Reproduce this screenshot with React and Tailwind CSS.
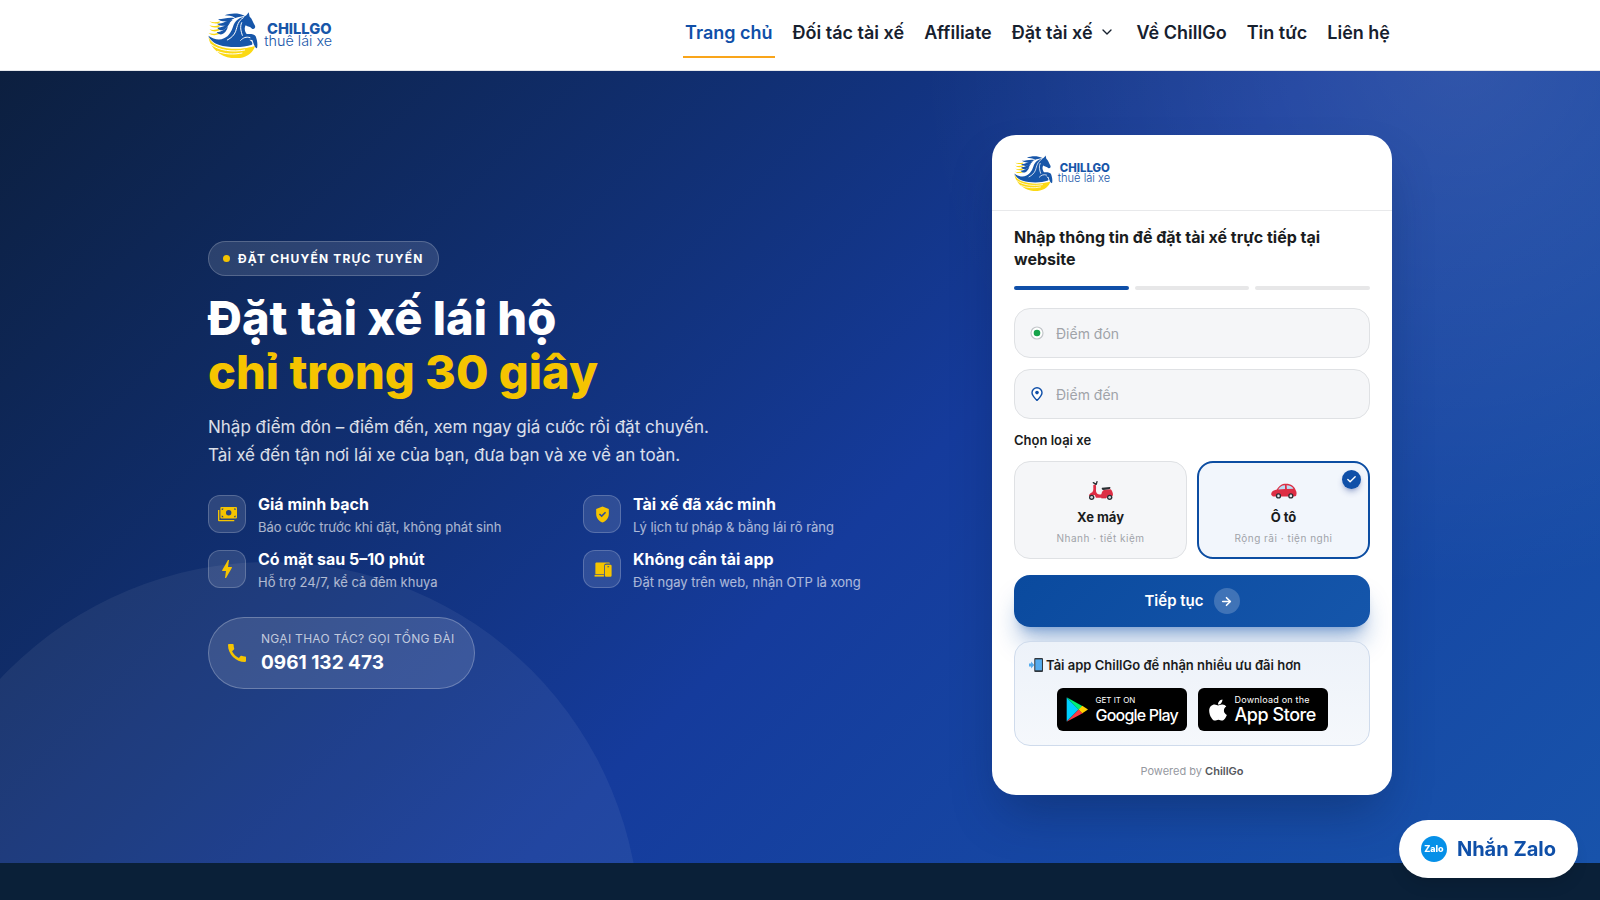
import { FaApple } from "react-icons/fa";
import { MdBolt, MdCall, MdGppGood } from "react-icons/md";
import { ArrowRight, Check, ChevronDown } from "lucide-react";

const NAV = [
  { label: "Trang chủ", active: true },
  { label: "Đối tác tài xế" },
  { label: "Affiliate" },
  { label: "Đặt tài xế", menu: true },
  { label: "Về ChillGo" },
  { label: "Tin tức" },
  { label: "Liên hệ" },
];

function Logo({ className }) {
  return (
    <svg viewBox="0 0 375 138" className={className} role="img" aria-label="ChillGo thuê lái xe">
      <g fill="#fbd914">
        <path d="M5 28 C14 32 26 31 36 28 L34 33 C24 36 12 35 5 28Z" />
        <path d="M4 40 C14 44 26 42 36 38 L34 44 C24 48 12 48 4 40Z" />
        <path d="M5 52 C14 56 24 54 36 49 L34 55 C24 60 13 60 5 52Z" />
        <path d="M2 63 C12 67 24 66 34 61 L34 66 C22 71 10 71 2 63Z" />
        <path d="M1 74 C6 86 16 95 30 101 C58 112 98 113 124 106 C134 104 138 103 141 101 C137 122 114 138 86 139 C46 140 8 114 1 74Z" />
      </g>
      <g fill="none" stroke="#fff" strokeLinecap="round" strokeWidth="3">
        <path d="M10 98 C34 116 74 121 110 114" />
        <path d="M28 118 C50 127 78 128 102 123" />
      </g>
      <g fill="#1756a9">
        <path d="M50 10 C66 4 88 1 110 11 C96 14 88 15 82 18 C72 11 60 11 50 10Z" />
        <path d="M30 22 C48 22 62 14 80 19 C70 22 66 28 60 30 C50 28 40 30 30 22Z" />
        <path d="M27 35 C44 36 54 26 74 24 C66 30 62 38 54 41 C44 42 34 42 27 35Z" />
        <path d="M28 47 C42 46 52 40 66 32 C60 42 56 50 46 54 C40 56 32 54 28 47Z" />
        <path d="M26 60 C40 60 50 52 60 44 C56 56 50 64 42 67 C36 68 29 66 26 60Z" />
        <path d="M122 1 L125 14 C132 19 134 29 141 41 C143 47 139 53 132 50 C128 44 120 45 113 40 C108 48 110 58 116 66 C128 65 140 66 143 73 C147 84 150 96 147 109 C139 106 137 94 133 84 L124 83 C132 88 135 93 132 98 C104 108 60 107 34 99 C18 93 6 84 1 71 C16 82 34 86 48 79 C64 71 70 58 75 44 C81 26 92 18 106 15 C113 13 118 8 122 1Z" />
      </g>
      <g fill="none" stroke="#fff" strokeLinecap="round" strokeWidth="3">
        <path d="M106 17 C90 26 88 42 83 58 C79 69 70 78 58 84" />
        <path d="M101 32 C95 44 99 58 103 70" />
        <path d="M126 77 C114 73 106 77 98 85" />
      </g>
      <text x="177" y="66" fill="#1756a9" fontFamily="Inter, sans-serif" fontWeight="800" fontSize="44">
        CHILLGO
      </text>
      <text x="169" y="103" fill="#1756a9" fontFamily="Inter, sans-serif" fontWeight="300" fontSize="43">
        thuê lái xe
      </text>
    </svg>
  );
}

function CashIcon({ className }) {
  return (
    <svg viewBox="0 0 56 44" className={className} fill="currentColor" aria-hidden="true">
      <path d="M0 9h4v29h44v4H3a3 3 0 0 1-3-3Z" />
      <path
        fillRule="evenodd"
        d="M10 0h43a3 3 0 0 1 3 3v28a3 3 0 0 1-3 3H10a3 3 0 0 1-3-3V3a3 3 0 0 1 3-3Zm21.500 9a8 8 0 1 0 0 16 8 8 0 0 0 0-16ZM11 4v5a5 5 0 0 0 5-5Zm36 0a5 5 0 0 0 5 5V4ZM11 30h5a5 5 0 0 0-5-5Zm41 0v-5a5 5 0 0 0-5 5Z"
      />
    </svg>
  );
}

function DevicesIcon({ className }) {
  return (
    <svg viewBox="0 0 24 24" className={className} fill="currentColor" aria-hidden="true">
      <path d="M4 3h16a1.500 1.500 0 0 1 1.500 1.500H17a3 3 0 0 0-3 3V18H3V4.500A1.500 1.500 0 0 1 4 3Z" />
      <path d="M2 18.800h11.800V21H2z" />
      <path
        fillRule="evenodd"
        d="M16.500 6h5.500A1.500 1.500 0 0 1 23.500 7.500v12A1.500 1.500 0 0 1 22 21h-5.500a1.500 1.500 0 0 1-1.500-1.500v-12A1.500 1.500 0 0 1 16.500 6Zm1.700 2v1.300h2.200V8Z"
      />
    </svg>
  );
}

function ScooterIcon({ className }) {
  return (
    <svg viewBox="0 0 78 60" className={className} aria-hidden="true">
      <path fill="#be1931" d="M40 44h14v8H40z" />
      <path
        fill="#dd2e44"
        d="M16 12 L23 10 C25 16 24 24 24 31 C26 40 32 42 40 40 C42 32 44 27 50 26 L68 25 C72 29 75 35 75 43 L70 48 L58 50 L24 50 L20 42 L4 46 C1 42 6 37 13 34 C18 28 15 18 16 12Z"
      />
      <path fill="#292f33" d="M42 20 L66 18 C69 20 67 24 62 25 L46 27 C41 26 40 22 42 20Z" />
      <path fill="none" stroke="#292f33" strokeWidth="4" strokeLinecap="round" d="M16 5 L24 10 M27 2 L25 9" />
      <circle cx="11" cy="49" r="8" fill="#292f33" />
      <circle cx="11" cy="49" r="4" fill="#ccd6dd" />
      <circle cx="65" cy="49" r="8" fill="#292f33" />
      <circle cx="65" cy="49" r="4" fill="#ccd6dd" />
    </svg>
  );
}

function CarIcon({ className }) {
  return (
    <svg viewBox="0 0 80 48" className={className} aria-hidden="true">
      <path
        fill="#dd2e44"
        d="M1 36 C0 28 3 22 18 19 C26 8 32 2 46 2 C62 2 72 10 76 22 C80 28 79 34 77 39 L70 41 L6 41Z"
      />
      <path fill="#bbddf5" d="M22 19 C27 11 32 6 43 6 L43 18Z" />
      <path fill="#bbddf5" d="M48 6 C58 6 66 10 69 17 L49 18Z" />
      <circle cx="23" cy="39" r="8" fill="#292f33" />
      <circle cx="23" cy="39" r="4" fill="#e1e8ed" />
      <circle cx="61" cy="39" r="8" fill="#292f33" />
      <circle cx="61" cy="39" r="4" fill="#e1e8ed" />
    </svg>
  );
}

function PhoneArrowIcon({ className }) {
  return (
    <svg viewBox="0 0 40 40" className={className} aria-hidden="true">
      <rect x="15" y="0" width="25" height="40" rx="3" fill="#31373d" />
      <rect x="18" y="4" width="19" height="31" fill="#55acee" />
      <path fill="#55acee" d="M0 16h6V10l9 10-9 10v-6H0z" />
    </svg>
  );
}

function PlayLogo({ className }) {
  return (
    <svg viewBox="0 0 66 74" className={className} aria-hidden="true">
      <path fill="#00d0ff" d="M2 1 L2 73 L38 37Z" />
      <path fill="#00f076" d="M2 0 L50 27 L38 38Z" />
      <path fill="#ff3a44" d="M2 74 L50 48 L38 37Z" />
      <path fill="#ffd000" d="M49 26 L66 37 L49 48 L38 37Z" />
    </svg>
  );
}

const FEATURES = [
  { Icon: CashIcon, title: "Giá minh bạch", text: "Báo cước trước khi đặt, không phát sinh" },
  { Icon: MdGppGood, title: "Tài xế đã xác minh", text: "Lý lịch tư pháp & bằng lái rõ ràng" },
  { Icon: MdBolt, title: "Có mặt sau 5–10 phút", text: "Hỗ trợ 24/7, kể cả đêm khuya", large: true },
  { Icon: DevicesIcon, title: "Không cần tải app", text: "Đặt ngay trên web, nhận OTP là xong" },
];

function Header() {
  return (
    <header className="border-b border-gray-200 bg-white">
      <div className="mx-auto flex h-[70px] w-full max-w-[1184px] items-center justify-between">
        <a href="#home">
          <Logo className="h-[46px] w-[125px]" />
        </a>
        <nav className="flex items-center gap-4 pb-1 text-[18px] font-semibold">
          {NAV.map((item) => (
            <a
              key={item.label}
              href="#nav"
              className={
                item.active
                  ? "flex h-[50px] items-center border-b-2 border-[#f9a51a] px-[2px] text-[#0f4fa8]"
                  : "flex h-[50px] items-center border-b-2 border-transparent px-[2px] text-[#16202e]"
              }
            >
              {item.label}
              {item.menu && <ChevronDown className="mr-[2px] ml-[6px] size-4" />}
            </a>
          ))}
        </nav>
      </div>
    </header>
  );
}

function Intro() {
  return (
    <div className="flex min-w-0 flex-1 flex-col items-start">
      <p className="flex h-[35px] items-center gap-2 rounded-full border border-white/20 bg-white/12 px-[14px] text-[12px] font-bold tracking-widest text-white">
        <span className="size-[7px] rounded-full bg-[#f5c400]" />
        ĐẶT CHUYẾN TRỰC TUYẾN
      </p>
      <h1 className="mt-[15px] text-[47px] leading-[54px] font-extrabold text-white">
        Đặt tài xế lái hộ
        <span className="block text-[#f5c400]">chỉ trong 30 giây</span>
      </h1>
      <p className="mt-[14px] text-[17px] leading-7 text-white/85">
        Nhập điểm đón – điểm đến, xem ngay giá cước rồi đặt chuyến.
        <br />
        Tài xế đến tận nơi lái xe của bạn, đưa bạn và xe về an toàn.
      </p>
      <ul className="mt-[26px] grid w-full grid-cols-2 gap-x-[22px] gap-y-3">
        {FEATURES.map(({ Icon, title, text, large }) => (
          <li key={title} className="flex items-start gap-3">
            <span className="flex size-[38px] shrink-0 items-center justify-center rounded-xl border border-white/20 bg-white/12 text-[#f5c400]">
              <Icon className={large ? "size-6" : "size-[19px]"} />
            </span>
            <span className="flex flex-col">
              <strong className="text-[16px] leading-[19px] font-bold text-white">{title}</strong>
              <span className="mt-[3px] text-[13px] leading-[21px] text-white/65">{text}</span>
            </span>
          </li>
        ))}
      </ul>
      <a
        href="tel:0961132473"
        className="mt-6 flex h-[72px] items-center gap-3 rounded-full border border-white/25 bg-white/12 px-4"
      >
        <MdCall className="size-6 text-[#f5c400]" />
        <span className="flex flex-col pr-1">
          <span className="text-[12px] leading-5 tracking-wide text-white/70">NGẠI THAO TÁC? GỌI TỔNG ĐÀI</span>
          <strong className="text-[19px] leading-7 font-bold text-white">0961 132 473</strong>
        </span>
      </a>
    </div>
  );
}

function PlaceField({ id, label, children }) {
  return (
    <div className="flex h-[50px] items-center gap-3 rounded-2xl border border-[#dfe1e4] bg-[#f5f6f8] px-[15px]">
      <label htmlFor={id} aria-label={label} className="flex size-[14px] shrink-0 items-center justify-center">
        {children}
      </label>
      <input
        id={id}
        type="text"
        placeholder={label}
        className="h-full min-w-0 flex-1 bg-transparent text-[14px] leading-6 text-gray-900 outline-none placeholder:text-[#a0a3a9]"
      />
    </div>
  );
}

function VehicleOption({ Icon, title, text, checked }) {
  return (
    <label
      className={
        checked
          ? "relative flex h-[98px] cursor-pointer flex-col items-center rounded-2xl border-2 border-[#0c4da2] bg-[#f2f6fc] pt-[18px]"
          : "relative flex h-[98px] cursor-pointer flex-col items-center rounded-2xl border border-[#dfe1e4] bg-[#f5f6f8] pt-[19px]"
      }
    >
      <input type="radio" name="vehicle" className="sr-only" defaultChecked={checked} />
      <Icon className="h-5 w-[26px]" />
      <span className="mt-[6px] text-[13px] leading-5 font-bold text-[#1a1c20]">{title}</span>
      <span className="mt-[3px] text-[10px] leading-4 tracking-wider text-[#a0a3a9]">{text}</span>
      {checked && (
        <span className="absolute top-[7px] right-[7px] flex size-[19px] items-center justify-center rounded-full bg-[#0f4fa8] text-white shadow-md shadow-blue-900/30">
          <Check className="size-[11px]" strokeWidth={3} />
        </span>
      )}
    </label>
  );
}

function BookingCard() {
  return (
    <form
      onSubmit={(e) => e.preventDefault()}
      className="w-[400px] shrink-0 rounded-3xl bg-white shadow-2xl shadow-[#0a1f44]/40"
    >
      <div className="flex h-[76px] items-center border-b border-[#e8e9eb] px-[22px]">
        <Logo className="h-9 w-[97px]" />
      </div>
      <div className="px-[22px] pt-[15px] pb-4">
        <h2 className="text-[16px] leading-[22px] font-bold text-[#1a1c20]">
          Nhập thông tin để đặt tài xế trực tiếp tại website
        </h2>
        <div className="mt-4 flex gap-[6px]">
          <span className="h-1 flex-1 rounded-full bg-[#0f4fa8]" />
          <span className="h-1 flex-1 rounded-full bg-[#e7e7e8]" />
          <span className="h-1 flex-1 rounded-full bg-[#e7e7e8]" />
        </div>
        <div className="mt-[18px] flex flex-col gap-[11px]">
          <PlaceField id="pickup" label="Điểm đón">
            <svg viewBox="0 0 14 14" className="size-[14px]" aria-hidden="true">
              <circle cx="7" cy="7" r="6" fill="#fff" stroke="#c3c6ca" strokeWidth="1.200" />
              <circle cx="7" cy="7" r="3.300" fill="#16a34a" />
            </svg>
          </PlaceField>
          <PlaceField id="dropoff" label="Điểm đến">
            <svg viewBox="0 0 14 14" className="size-[14px]" aria-hidden="true">
              <path
                d="M7 13.500 C4 10.500 2 8.500 2 5.800 A5 5 0 0 1 12 5.800 C12 8.500 10 10.500 7 13.500Z"
                fill="#fff"
                stroke="#0f4fa8"
                strokeWidth="1.400"
              />
              <circle cx="7" cy="5.600" r="1.800" fill="#0f4fa8" />
            </svg>
          </PlaceField>
        </div>
        <fieldset>
          <legend className="pt-[11px] text-[13px] leading-5 font-semibold text-[#1a1c20]">Chọn loại xe</legend>
          <div className="mt-[11px] grid grid-cols-2 gap-[10px]">
            <VehicleOption Icon={ScooterIcon} title="Xe máy" text="Nhanh · tiết kiệm" />
            <VehicleOption Icon={CarIcon} title="Ô tô" text="Rộng rãi · tiện nghi" checked />
          </div>
        </fieldset>
        <button
          type="submit"
          className="mt-4 flex h-[52px] w-full items-center justify-center gap-[10px] rounded-2xl bg-linear-135 from-[#0a4a9e] to-[#1556ab] text-[15px] font-semibold text-white shadow-xl shadow-[#0f4fa8]/35"
        >
          Tiếp tục
          <span className="flex size-[26px] items-center justify-center rounded-full bg-white/20">
            <ArrowRight className="size-[13px]" strokeWidth={3} />
          </span>
        </button>
        <div className="mt-[14px] h-[105px] rounded-2xl border border-[#cfdbec] bg-linear-to-b from-[#edf2f9] to-[#f5f8fc] px-[14px] pt-[13px]">
          <p className="flex items-center gap-[3px] text-[13px] leading-5 font-semibold text-[#1a1c20]">
            <PhoneArrowIcon className="size-[14px]" />
            Tải app ChillGo để nhận nhiều ưu đãi hơn
          </p>
          <div className="mt-[13px] flex justify-center gap-[11px]">
            <a href="#google-play" className="flex h-[43px] w-[130px] items-center gap-2 rounded-md bg-black pl-[9px] text-white">
              <PlayLogo className="h-[25px] w-[22px]" />
              <span className="flex flex-col whitespace-nowrap">
                <span className="text-[8px] leading-[10px]">GET IT ON</span>
                <span className="text-[16px] leading-5 font-medium tracking-tighter">Google Play</span>
              </span>
            </a>
            <a href="#app-store" className="flex h-[43px] w-[130px] items-center gap-[5px] rounded-md bg-black pl-2 text-white">
              <FaApple className="size-6" />
              <span className="flex flex-col whitespace-nowrap">
                <span className="text-[9px] leading-[11px] tracking-wide">Download on the</span>
                <span className="text-[18px] leading-5 font-medium tracking-tight">App Store</span>
              </span>
            </a>
          </div>
        </div>
        <p className="mt-[17px] text-center text-[11px] leading-4 text-[#96999f]">
          Powered by <strong className="font-semibold text-[#54575c]">ChillGo</strong>
        </p>
      </div>
    </form>
  );
}

export default function App() {
  return (
    <div className="flex min-h-screen flex-col bg-[#0a2038] font-['Inter','Noto_Sans',sans-serif]">
      <Header />
      <main className="relative overflow-hidden bg-linear-135 from-[#0c1f3f] via-[#153b9c] via-55% to-[#1853ab]">
        <span className="absolute -bottom-[439px] -left-[100px] size-[740px] rounded-full bg-white/6" />
        <span className="absolute -top-[560px] -right-[400px] size-[1080px] rounded-full bg-radial-[closest-side] from-white/12 to-transparent" />
        <div className="relative mx-auto flex w-full max-w-[1184px] items-center gap-14 pt-16 pb-[68px]">
          <Intro />
          <BookingCard />
        </div>
      </main>
      <a
        href="#zalo"
        className="fixed right-[22px] bottom-[22px] flex h-[58px] items-center gap-[10px] rounded-full bg-white px-[22px] text-[20px] font-bold text-[#0f4fa8] shadow-lg"
      >
        <span className="flex size-[26px] items-center justify-center rounded-full bg-[#0690e8] text-[9px] font-extrabold text-white">
          Zalo
        </span>
        Nhắn Zalo
      </a>
    </div>
  );
}
